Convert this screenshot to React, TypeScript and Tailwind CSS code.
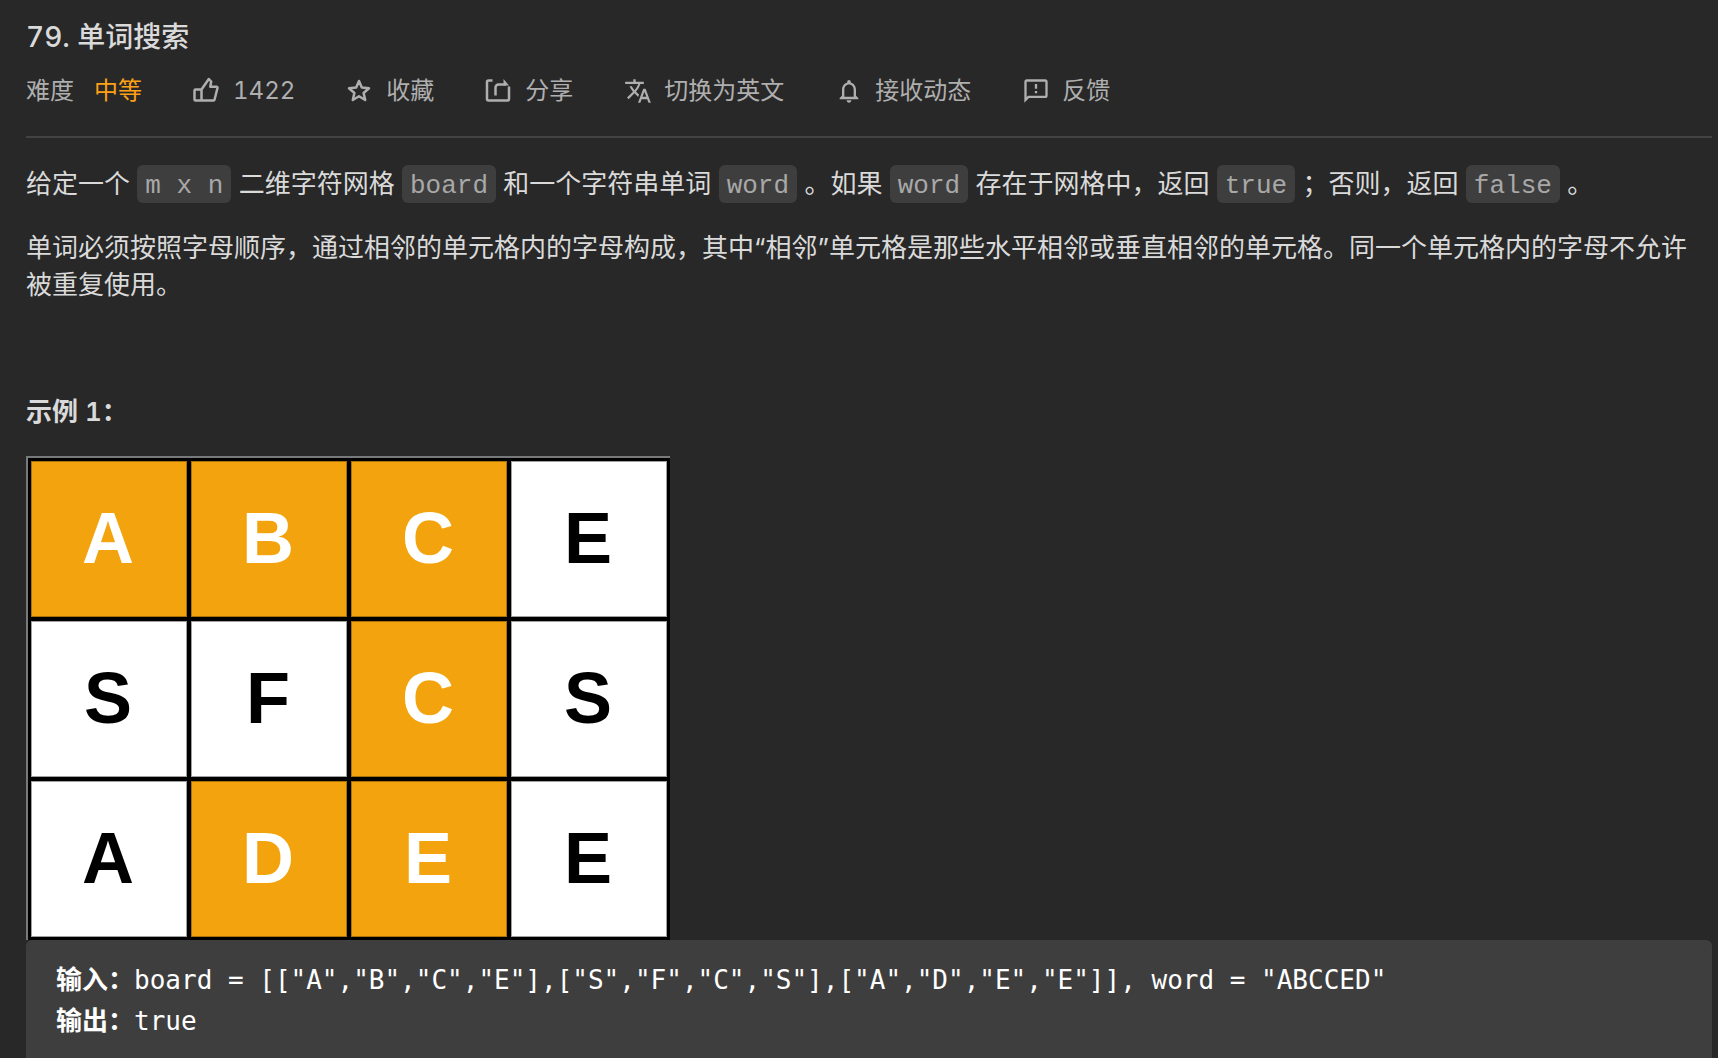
import type { ReactNode } from 'react';

const board = [
  ['A', 'B', 'C', 'E'],
  ['S', 'F', 'C', 'S'],
  ['A', 'D', 'E', 'E'],
];

const path = new Set(['0-0', '0-1', '0-2', '1-2', '2-1', '2-2']);

function OutlineIcon({ children }: { children: ReactNode }) {
  return (
    <svg
      viewBox="0 0 28 28"
      className="h-7 w-7 shrink-0"
      fill="none"
      stroke="currentColor"
      strokeWidth="2.5"
      strokeLinejoin="round"
      aria-hidden="true"
    >
      {children}
    </svg>
  );
}

function SolidIcon({ d }: { d: string }) {
  return (
    <svg viewBox="0 0 24 24" className="h-7 w-7 shrink-0" fill="currentColor" aria-hidden="true">
      <path d={d} />
    </svg>
  );
}

function Action({ icon, label }: { icon: ReactNode; label: string }) {
  return (
    <button type="button" className="flex items-center gap-3 whitespace-nowrap">
      {icon}
      <span>{label}</span>
    </button>
  );
}

function Code({ children }: { children: ReactNode }) {
  return (
    <code className="rounded-md bg-[#3e3e3e] px-2 pt-1.5 pb-0.5 font-['Liberation_Mono',monospace] text-[26px] text-[#a8a8a8]">
      {children}
    </code>
  );
}

export default function App() {
  return (
    <main
      className="min-h-screen bg-[#282828] pt-[17px] pr-1.5 pl-[26px] font-['Inter','Noto_Sans_CJK_SC',sans-serif] text-[26px] leading-[37px] text-[#dadada]"
      lang="zh-CN"
    >
      <h1 className="text-[28px] leading-10 font-medium tabular-nums">79. 单词搜索</h1>

      <div className="flex h-[81px] items-center gap-[51px] border-b-2 border-[#434343] pb-3 text-2xl text-[#afafaf] tabular-nums">
        <div className="flex gap-5 whitespace-nowrap">
          <span>难度</span>
          <span className="text-[#ffa116]">中等</span>
        </div>
        <Action
          label="1422"
          icon={
            <OutlineIcon>
              <path d="M8.500 12.500H2.500a1 1 0 0 0-1 1v9a1 1 0 0 0 1 1H20.500a1 1 0 0 0 1-.8L24.500 11a1 1 0 0 0-1-1.200H17.300L18.200 4.500 15.800 2 8.500 12.500V23.500" />
            </OutlineIcon>
          }
        />
        <Action
          label="收藏"
          icon={
            <OutlineIcon>
              <path d="M13 4L15.800 10.600 23 11.300 17.600 16 19.200 23 13 19.300 6.800 23 8.400 16 3 11.300 10.200 10.600z" />
            </OutlineIcon>
          }
        />
        <Action
          label="分享"
          icon={
            <OutlineIcon>
              <path d="M7.500 3.500H3.500A1.500 1.500 0 0 0 2 5V22A1.500 1.500 0 0 0 3.500 23.500H22.500A1.500 1.500 0 0 0 24 22V9.500M10.500 18.500V10.500A3 3 0 0 1 13.500 7.500H21" />
              <path d="M18.500 2L24 8.500H18.500z" fill="currentColor" stroke="none" />
            </OutlineIcon>
          }
        />
        <Action
          label="切换为英文"
          icon={
            <SolidIcon d="M12.870 15.070l-2.540-2.510.03-.03A17.520 17.520 0 0 0 14.070 6H17V4h-7V2H8v2H1v2h11.170C11.500 7.920 10.440 9.750 9 11.350 8.070 10.320 7.300 9.190 6.690 8h-2c.73 1.630 1.730 3.170 2.980 4.560l-5.090 5.020L4 19l5-5 3.110 3.110.76-2.040zM18.500 10h-2L12 22h2l1.120-3h4.750L21 22h2l-4.500-12zm-2.620 7l1.620-4.330L19.120 17h-3.240z" />
          }
        />
        <Action
          label="接收动态"
          icon={
            <SolidIcon d="M12 22c1.100 0 2-.9 2-2h-4c0 1.100.9 2 2 2zm6-6v-5c0-3.070-1.630-5.640-4.500-6.320V4c0-.83-.67-1.500-1.500-1.500s-1.500.67-1.500 1.500v.68C7.640 5.360 6 7.920 6 11v5l-2 2v1h16v-1l-2-2zm-2 1H8v-6c0-2.480 1.510-4.500 4-4.500s4 2.020 4 4.500v6z" />
          }
        />
        <Action
          label="反馈"
          icon={
            <SolidIcon d="M20 2H4c-1.100 0-2 .9-2 2v18l4-4h14c1.100 0 2-.9 2-2V4c0-1.100-.9-2-2-2zm0 14H5.170L4 17.170V4h16v12zM11 12h2v2h-2zm0-6h2v4h-2z" />
          }
        />
      </div>

      <p className="mt-[27px]">
        给定一个 <Code>m x n</Code> 二维字符网格 <Code>board</Code> 和一个字符串单词 <Code>word</Code> 。如果 <Code>word</Code>{' '}
        存在于网格中，返回 <Code>true</Code> ；否则，返回 <Code>false</Code> 。
      </p>
      <p className="mt-6">
        单词必须按照字母顺序，通过相邻的单元格内的字母构成，其中“相邻”单元格是那些水平相邻或垂直相邻的单元格。同一个单元格内的字母不允许被重复使用。
      </p>

      <h2 className="mt-[90px] font-semibold tabular-nums">示例 1：</h2>

      <div className="mt-[26px] w-fit border-t-2 border-l-2 border-[#77797b]">
        <div className="grid w-fit grid-cols-4 gap-1 bg-black p-[3px]">
          {board.map((row, r) =>
            row.map((letter, c) => (
              <div
                key={`${r}-${c}`}
                className={`flex size-[156px] items-center justify-center border pr-0.5 pb-0.5 font-['Liberation_Sans',sans-serif] text-[72px] leading-none font-bold ${
                  path.has(`${r}-${c}`) ? 'border-[#a87208] bg-[#f2a30d] text-white' : 'border-[#a0a0a0] bg-white text-black'
                }`}
              >
                {letter}
              </div>
            )),
          )}
        </div>
      </div>

      <pre className="overflow-hidden rounded-t-md bg-[#3e3e3e] px-[30px] pt-5 pb-[18px] font-['DejaVu_Sans_Mono','Noto_Sans_CJK_SC',monospace] leading-[41px] text-white">
        <strong>输入：</strong>
        {'board = [["A","B","C","E"],["S","F","C","S"],["A","D","E","E"]], word = "ABCCED"\n'}
        <strong>输出：</strong>
        {'true'}
      </pre>
    </main>
  );
}
